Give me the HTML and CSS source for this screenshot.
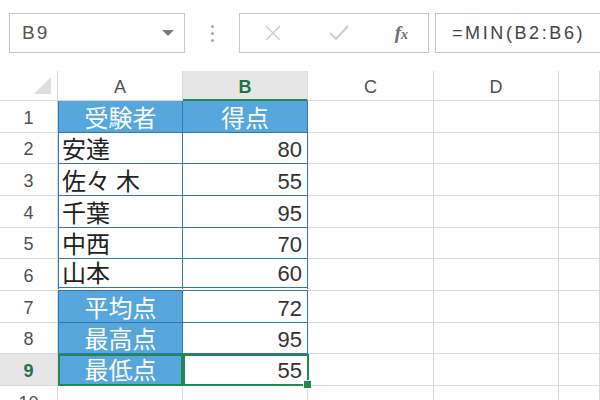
FILE: index.html
```html
<!DOCTYPE html>
<html lang="ja">
<head>
<meta charset="utf-8">
<link rel="stylesheet" href="styles.css">
</head>
<body>
<div class="app">
  <div class="toolbar">
    <div class="namebox">
      <span class="name">B9</span>
      <svg class="caret" width="12" height="7" viewBox="0 0 12 7"><polygon points="0,0 12,0 6,6" fill="#7a7a7a"/></svg>
    </div>
    <div class="dots"><i></i><i></i><i></i></div>
    <div class="btnbox">
      <svg class="ico" width="20" height="20" viewBox="0 0 20 20"><path d="M3 3 L17 17 M17 3 L3 17" stroke="#cfcfcf" stroke-width="1.6" fill="none"/></svg>
      <svg class="ico" width="22" height="20" viewBox="0 0 22 20"><path d="M2 10 L8 16 L20 3" stroke="#cfcfcf" stroke-width="2.2" fill="none"/></svg>
      <span class="fx">f<span class="x">x</span></span>
    </div>
    <div class="formula">=MIN(B2:B6)</div>
  </div>
  <div class="sheet">
    <div class="c hd corner"><svg width="18" height="18" viewBox="0 0 18 18"><polygon points="17,0 17,17 0,17" fill="#dedede"/></svg></div>
    <div class="c hd">A</div>
    <div class="c hd sel">B</div>
    <div class="c hd">C</div>
    <div class="c hd">D</div>
    <div class="c hd"></div>

    <div class="c rh">1</div>
    <div class="c t a blue ctr">受験者</div>
    <div class="c t blue ctr">得点</div>
    <div class="c"></div><div class="c"></div><div class="c"></div>

    <div class="c rh">2</div>
    <div class="c t a">安達</div>
    <div class="c t num">80</div>
    <div class="c"></div><div class="c"></div><div class="c"></div>

    <div class="c rh">3</div>
    <div class="c t a">佐々&#8197;木</div>
    <div class="c t num">55</div>
    <div class="c"></div><div class="c"></div><div class="c"></div>

    <div class="c rh">4</div>
    <div class="c t a">千葉</div>
    <div class="c t num">95</div>
    <div class="c"></div><div class="c"></div><div class="c"></div>

    <div class="c rh">5</div>
    <div class="c t a">中西</div>
    <div class="c t num">70</div>
    <div class="c"></div><div class="c"></div><div class="c"></div>

    <div class="c rh">6</div>
    <div class="c t a dbl">山本</div>
    <div class="c t num dbl">60</div>
    <div class="c"></div><div class="c"></div><div class="c"></div>

    <div class="c rh">7</div>
    <div class="c t a blue ctr">平均点</div>
    <div class="c t num">72</div>
    <div class="c"></div><div class="c"></div><div class="c"></div>

    <div class="c rh">8</div>
    <div class="c t a blue ctr">最高点</div>
    <div class="c t num">95</div>
    <div class="c"></div><div class="c"></div><div class="c"></div>

    <div class="c rh selrow">9</div>
    <div class="c t a blue ctr gsel">最低点</div>
    <div class="c t num gsel active">55<span class="handle"></span></div>
    <div class="c"></div><div class="c"></div><div class="c"></div>

    <div class="c rh">10</div>
    <div class="c"></div><div class="c"></div><div class="c"></div><div class="c"></div><div class="c"></div>
  </div>
</div>
</body>
</html>
```

FILE: styles.css
```css
html, body {
  margin: 0;
  padding: 0;
  background: #fff;
  overflow: hidden;
}
.app {
  width: 600px;
  height: 400px;
  overflow: hidden;
  font-family: "Liberation Sans", "Noto Sans CJK JP", sans-serif;
}
.toolbar {
  height: 71px;
  box-sizing: border-box;
  padding: 13px 0 0 9px;
  display: flex;
  align-items: flex-start;
}
.namebox {
  width: 176px;
  height: 40px;
  box-sizing: border-box;
  border: 1px solid #c6c6c6;
  display: flex;
  align-items: center;
  justify-content: space-between;
  padding: 0 10px 0 12px;
}
.name {
  font-size: 19px;
  color: #555;
  letter-spacing: 2px;
}
.caret { margin-top: 1px; }
.dots {
  width: 54px;
  height: 40px;
  display: flex;
  flex-direction: column;
  align-items: center;
  justify-content: center;
  gap: 4px;
}
.dots i {
  width: 3px;
  height: 3px;
  border-radius: 50%;
  background: #a8a8a8;
}
.btnbox {
  width: 190px;
  height: 40px;
  box-sizing: border-box;
  border: 1px solid #c6c6c6;
  display: flex;
  align-items: center;
  padding: 0 20px 0 23px;
  justify-content: space-between;
}
.fx {
  font-family: "Liberation Serif", serif;
  font-style: italic;
  font-weight: bold;
  font-size: 19px;
  color: #6e6e6e;
}
.fx .x { font-size: 14px; }
.formula {
  flex: 1;
  margin-left: 6px;
  margin-right: -4px;
  height: 40px;
  box-sizing: border-box;
  border: 1px solid #c6c6c6;
  padding: 0 0 0 16px;
  display: flex;
  align-items: center;
  font-size: 18px;
  letter-spacing: 2.6px;
  color: #444;
}
.sheet {
  display: grid;
  grid-template-columns: 58px 125px 125px 126px 125px 1fr;
  grid-template-rows: 30px repeat(10, 31.67px);
}
.c {
  box-sizing: border-box;
  border-right: 1px solid #dadada;
  border-bottom: 1px solid #dadada;
  position: relative;
  display: flex;
  align-items: flex-end;
  line-height: 26px;
  font-size: 24px;
  color: #222;
  min-width: 0;
}
.hd {
  align-items: center;
  justify-content: center;
  font-size: 18px;
  line-height: 20px;
  color: #505050;
  padding-top: 3px;
}
.hd.sel {
  background: #e6e6e6;
  color: #217346;
  font-weight: bold;
  border-bottom: 2px solid #1f8a4c;
}
.corner {
  align-items: flex-end;
  justify-content: flex-end;
  padding: 0 5px 5px 0;
}
.rh {
  align-items: center;
  justify-content: center;
  font-size: 18px;
  line-height: 20px;
  color: #505050;
  padding-top: 3px;
}
.rh.selrow {
  background: #e6e6e6;
  color: #217346;
  font-weight: bold;
}
.t {
  border-right: 1px solid #2e79b4;
  border-bottom: 1px solid #2e79b4;
}
.a {
  border-left: 1px solid #2e79b4;
  padding-left: 3px;
}
.blue {
  background: #57a6dc;
  color: #fff;
}
.ctr {
  justify-content: center;
  padding-left: 0;
}
.num {
  justify-content: flex-end;
  padding-right: 5px;
  font-size: 22px;
  color: #333;
}
.dbl {
  border-bottom: 4px double #2e79b4;
}
.gsel {
  border: 2px solid #1f8a4c;
}
.active {
  margin-right: -1px;
  z-index: 2;
}
.handle {
  position: absolute;
  right: -5px;
  bottom: -5px;
  width: 7px;
  height: 7px;
  background: #1f8a4c;
  border: 1px solid #fff;
}
```
